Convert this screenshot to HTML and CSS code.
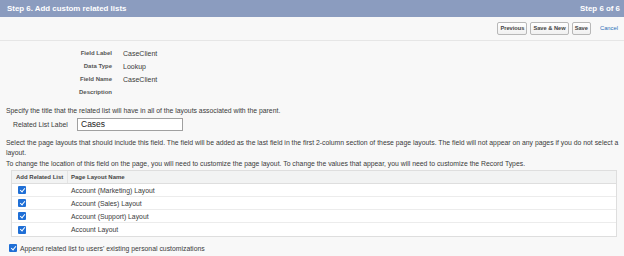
FILE: index.html
```html
<!DOCTYPE html>
<html>
<head>
<meta charset="utf-8">
<link rel="stylesheet" href="styles.css">
</head>
<body>
<div class="page">
  <div class="header">
    <span class="title">Step 6. Add custom related lists</span>
    <span class="step">Step 6 of 6</span>
  </div>
  <div class="toolbar">
    <button class="btn">Previous</button>
    <button class="btn">Save &amp; New</button>
    <button class="btn">Save</button>
    <a class="cancel">Cancel</a>
  </div>
  <div class="content">
    <div class="fields">
      <div class="flabel">Field Label</div><div class="fval">CaseClient</div>
      <div class="flabel">Data Type</div><div class="fval">Lookup</div>
      <div class="flabel">Field Name</div><div class="fval">CaseClient</div>
      <div class="flabel">Description</div><div class="fval"></div>
    </div>
    <p class="p1">Specify the title that the related list will have in all of the layouts associated with the parent.</p>
    <div class="rl">
      <span class="rllabel">Related List Label</span>
      <div class="input">Cases</div>
    </div>
    <p class="p2">Select the page layouts that should include this field. The field will be added as the last field in the first 2-column section of these page layouts. The field will not appear on any pages if you do not select a layout.</p>
    <p class="p3">To change the location of this field on the page, you will need to customize the page layout. To change the values that appear, you will need to customize the Record Types.</p>
    <div class="table">
      <div class="row head">
        <div class="c1">Add Related List</div>
        <div class="c2">Page Layout Name</div>
      </div>
      <div class="row"><div class="c1"><span class="cb"></span></div><div class="c2">Account (Marketing) Layout</div></div>
      <div class="row"><div class="c1"><span class="cb"></span></div><div class="c2">Account (Sales) Layout</div></div>
      <div class="row"><div class="c1"><span class="cb"></span></div><div class="c2">Account (Support) Layout</div></div>
      <div class="row last"><div class="c1"><span class="cb"></span></div><div class="c2">Account Layout</div></div>
    </div>
    <div class="append"><span class="cb"></span><span>Append related list to users' existing personal customizations</span></div>
  </div>
</div>
</body>
</html>
```
FILE: styles.css
```css
html, body {
  margin: 0;
  padding: 0;
  background: #f8f8f8;
}
.page {
  width: 624px;
  height: 256px;
  overflow: hidden;
  font-family: "Liberation Sans", Arial, sans-serif;
  color: #3a3a3a;
  font-size: 6.85px;
}
.header {
  height: 17px;
  background: #8b9cbf;
  display: flex;
  align-items: center;
  justify-content: space-between;
  padding: 0 4px 0 7px;
  color: #fff;
  font-weight: bold;
  font-size: 7.9px;
}
.toolbar {
  display: flex;
  align-items: flex-start;
  justify-content: flex-end;
  gap: 3px;
  border-bottom: 1px solid #e6e6e6;
  box-sizing: border-box;
  height: 24px;
  padding: 5px 6px 0 0;
}
.btn {
  font-family: "Liberation Sans", Arial, sans-serif;
  font-size: 5.7px;
  font-weight: bold;
  color: #444;
  background: linear-gradient(#ffffff, #f0f0f0);
  border: 1px solid #b8b8b8;
  border-radius: 2px;
  height: 13px;
  padding: 0 2px;
  margin: 0;
  line-height: 11px;
}
.cancel {
  color: #2a6fb8;
  font-size: 5.8px;
  line-height: 13px;
  margin-left: 6px;
}
.content {
  padding: 6px 0 0 6px;
}
.fields {
  display: grid;
  grid-template-columns: 106px auto;
  column-gap: 11px;
  row-gap: 0;
}
.flabel {
  font-weight: bold;
  font-size: 6px;
  color: #555;
  text-align: right;
  height: 13px;
  line-height: 13px;
}
.fval {
  height: 13px;
  line-height: 13px;
  font-size: 7px;
  color: #3a3a3a;
}
p {
  margin: 0;
  line-height: 10px;
}
.p1 {
  margin-top: 7px;
}
.rl {
  display: flex;
  align-items: center;
  margin-top: 2px;
  height: 13px;
}
.rllabel {
  margin-left: 7px;
  width: 64px;
}
.input {
  width: 101px;
  height: 11px;
  border: 1px solid #a0a0a0;
  background: #fff;
  font-size: 8.5px;
  line-height: 11px;
  padding-left: 3px;
  box-sizing: content-box;
  color: #222;
}
.p2 {
  margin-top: 7px;
}
.p3 {
  margin-top: 1px;
}
.table {
  margin: 1px 0 0 5px;
  width: 604px;
  border: 1px solid #dedede;
  background: #fff;
}
.row {
  display: flex;
  height: 13px;
  border-bottom: 1px solid #ececec;
  box-sizing: border-box;
}
.row.last {
  border-bottom: none;
}
.row.head {
  background: #f2f3f3;
  font-weight: bold;
  font-size: 6px;
  color: #444;
  border-bottom: 1px solid #dedede;
}
.c1 {
  width: 56px;
  border-right: 1px solid #e4e4e4;
  display: flex;
  align-items: center;
  padding-left: 4px;
  box-sizing: border-box;
}
.row:not(.head) .c1 {
  border-right: none;
  padding-left: 6px;
}
.c2 {
  display: flex;
  align-items: center;
  padding-left: 3px;
}
.cb {
  display: inline-block;
  width: 8px;
  height: 8px;
  border-radius: 1px;
  background: #1f6fd6;
  position: relative;
  flex: none;
}
.cb::after {
  content: "";
  position: absolute;
  left: 2.6px;
  top: 0.8px;
  width: 2px;
  height: 4.2px;
  border: solid #fff;
  border-width: 0 1.2px 1.2px 0;
  transform: rotate(40deg);
}
.append {
  display: flex;
  align-items: center;
  gap: 3px;
  margin-top: 7px;
  margin-left: 3px;
}
```
